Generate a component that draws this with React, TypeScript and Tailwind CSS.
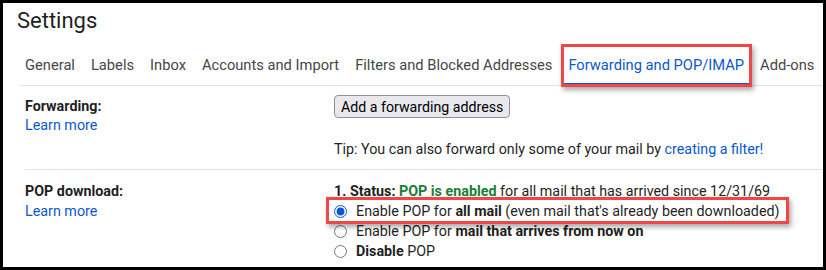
const tabs = [
  "General",
  "Labels",
  "Inbox",
  "Accounts and Import",
  "Filters and Blocked Addresses",
  "Forwarding and POP/IMAP",
  "Add-ons",
];

function Radio({ checked }: { checked?: boolean }) {
  return (
    <input
      type="radio"
      name="pop"
      defaultChecked={checked}
      className="m-0 mr-[9px] h-[13px] w-[13px] shrink-0 accent-[#0b57d0]"
    />
  );
}

export default function App() {
  return (
    <div className="w-[826px] h-[270px] bg-black p-[3px] font-['Roboto',sans-serif]">
      <div className="relative h-full bg-white overflow-hidden">
        <h1 className="pl-[14px] pt-[4px] text-[22px] leading-[28px] text-[#1f1f1f] font-normal">
          Settings
        </h1>

        <div className="ml-[22px] mt-[20px]">
          {/* tab strip */}
          <div className="flex border-b border-[#e3e3e3] -ml-[5px] gap-[6px]">
            {tabs.map((t) => {
              const active = t === "Forwarding and POP/IMAP";
              return (
                <div
                  key={t}
                  className={
                    active
                      ? "relative px-[5px] pb-[8px] -mb-px border-b-[3px] border-[#0b57d0] text-[14.7px] leading-[20px] text-[#0b57d0] whitespace-nowrap"
                      : "relative px-[5px] pb-[8px] -mb-px border-b-[3px] border-transparent text-[14.7px] leading-[20px] text-[#444746] whitespace-nowrap"
                  }
                >
                  {t}
                  {active && (
                    <span className="pointer-events-none absolute -left-[2px] -right-[3px] -top-[11px] -bottom-[4px] border-[3px] border-[#f04646] shadow-[2px_3px_5px_rgba(0,0,0,0.35)]" />
                  )}
                </div>
              );
            })}
          </div>

          {/* Forwarding */}
          <div className="flex border-b border-[#e3e3e3] pt-[10px] pb-[10px] text-[14.3px] leading-[20px] text-[#1f1f1f]">
            <div className="w-[309px] shrink-0">
              <div className="font-bold">Forwarding:</div>
              <div className="text-[#0b57d0] -mt-px">Learn more</div>
            </div>
            <div>
              <button className="h-[23px] -mt-px px-[6px] rounded-[4px] border border-[#8f8f9d] bg-[#e9e9ed] text-[14.2px] leading-[20px] text-black">
                Add a forwarding address
              </button>
              <div className="mt-[21px]">
                Tip: You can also forward only some of your mail by{" "}
                <span className="text-[#0b57d0]">creating a filter!</span>
              </div>
            </div>
          </div>

          {/* POP download */}
          <div className="flex pt-[11px] text-[14.3px] leading-[20px] text-[#1f1f1f]">
            <div className="w-[309px] shrink-0">
              <div className="font-bold">POP download:</div>
              <div className="text-[#0b57d0]">Learn more</div>
            </div>
            <div>
              <div>
                <span className="font-bold">1. Status: </span>
                <span className="font-bold text-[#188038]">POP is enabled</span>{" "}
                for all mail that has arrived since 12/31/69
              </div>
              <div className="relative flex items-center">
                <Radio checked />
                <span>
                  Enable POP for <b>all mail</b> (even mail that's already been downloaded)
                </span>
                <span className="pointer-events-none absolute -left-[8px] -right-[9px] -top-[4px] -bottom-[3px] border-[3px] border-[#f04646] shadow-[2px_3px_5px_rgba(0,0,0,0.35)]" />
              </div>
              <div className="flex items-center">
                <Radio />
                <span>
                  Enable POP for <b>mail that arrives from now on</b>
                </span>
              </div>
              <div className="flex items-center">
                <Radio />
                <span>
                  <b>Disable</b> POP
                </span>
              </div>
            </div>
          </div>
        </div>
      </div>
    </div>
  );
}
